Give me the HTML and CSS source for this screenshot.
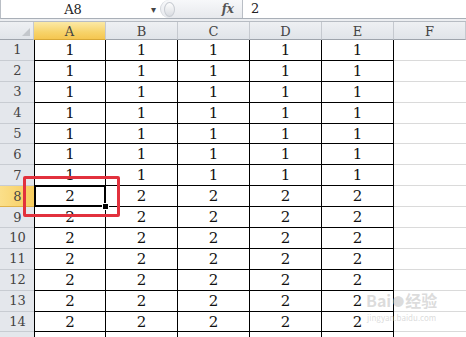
FILE: index.html
```html
<!DOCTYPE html>
<html lang="zh-CN">
<head>
    <meta charset="UTF-8">
    <title>Sheet1</title>
    <link rel="stylesheet" href="styles.css">
</head>
<body>
    <div class="page">
        <div class="formula-bar">
            <div class="name-box">
                <span class="cell-ref">A8</span>
                <span class="drop">&#9662;</span>
            </div>
            <div class="fx-area">
                <span class="knob"></span>
                <span class="fx">fx</span>
            </div>
            <div class="formula">2</div>
        </div>
        <div class="band"></div>

        <div class="sheet">
            <div class="row head">
                <div class="corner"><span class="tri"></span></div>
                <div class="ch active">A</div>
                <div class="ch">B</div>
                <div class="ch">C</div>
                <div class="ch">D</div>
                <div class="ch">E</div>
                <div class="ch">F</div>
            </div>
            <div class="row">
                <div class="rh">1</div>
                <div class="c first">1</div><div class="c">1</div><div class="c">1</div><div class="c">1</div><div class="c">1</div><div class="e"></div>
            </div>
            <div class="row">
                <div class="rh">2</div>
                <div class="c first">1</div><div class="c">1</div><div class="c">1</div><div class="c">1</div><div class="c">1</div><div class="e"></div>
            </div>
            <div class="row">
                <div class="rh">3</div>
                <div class="c first">1</div><div class="c">1</div><div class="c">1</div><div class="c">1</div><div class="c">1</div><div class="e"></div>
            </div>
            <div class="row">
                <div class="rh">4</div>
                <div class="c first">1</div><div class="c">1</div><div class="c">1</div><div class="c">1</div><div class="c">1</div><div class="e"></div>
            </div>
            <div class="row">
                <div class="rh">5</div>
                <div class="c first">1</div><div class="c">1</div><div class="c">1</div><div class="c">1</div><div class="c">1</div><div class="e"></div>
            </div>
            <div class="row">
                <div class="rh">6</div>
                <div class="c first">1</div><div class="c">1</div><div class="c">1</div><div class="c">1</div><div class="c">1</div><div class="e"></div>
            </div>
            <div class="row">
                <div class="rh">7</div>
                <div class="c first">1</div><div class="c">1</div><div class="c">1</div><div class="c">1</div><div class="c">1</div><div class="e"></div>
            </div>
            <div class="row">
                <div class="rh active">8</div>
                <div class="c first selected">2<span class="handle"></span></div><div class="c">2</div><div class="c">2</div><div class="c">2</div><div class="c">2</div><div class="e"></div>
            </div>
            <div class="row">
                <div class="rh">9</div>
                <div class="c first">2</div><div class="c">2</div><div class="c">2</div><div class="c">2</div><div class="c">2</div><div class="e"></div>
            </div>
            <div class="row">
                <div class="rh">10</div>
                <div class="c first">2</div><div class="c">2</div><div class="c">2</div><div class="c">2</div><div class="c">2</div><div class="e"></div>
            </div>
            <div class="row">
                <div class="rh">11</div>
                <div class="c first">2</div><div class="c">2</div><div class="c">2</div><div class="c">2</div><div class="c">2</div><div class="e"></div>
            </div>
            <div class="row">
                <div class="rh">12</div>
                <div class="c first">2</div><div class="c">2</div><div class="c">2</div><div class="c">2</div><div class="c">2</div><div class="e"></div>
            </div>
            <div class="row">
                <div class="rh">13</div>
                <div class="c first">2</div><div class="c">2</div><div class="c">2</div><div class="c">2</div><div class="c">2</div><div class="e"></div>
            </div>
            <div class="row">
                <div class="rh">14</div>
                <div class="c first">2</div><div class="c">2</div><div class="c">2</div><div class="c">2</div><div class="c">2</div><div class="e"></div>
            </div>
            <div class="row">
                <div class="rh"></div>
                <div class="c first"></div><div class="c"></div><div class="c"></div><div class="c"></div><div class="c"></div><div class="e"></div>
            </div>

            <!-- red highlight drawn over the selected cell -->
            <div class="mark"></div>

            <div class="watermark">
                <div class="wm-logo">Bai<span class="paw">&#9679;</span>经验</div>
                <div class="wm-url">jingyan.baidu.com</div>
            </div>
        </div>
    </div>
</body>
</html>
```

FILE: styles.css
```css
* {
    box-sizing: border-box;
}
body {
    margin: 0;
    background: #fff;
    overflow: hidden;
}
.page {
    width: 466px;
    height: 337px;
    overflow: hidden;
    font-family: "DejaVu Serif", serif;
}

/* formula bar */
.formula-bar {
    display: flex;
    height: 19px;
    border-left: 1px solid #b9bec5;
    border-bottom: 1px solid #a9afb7;
}
.name-box {
    width: 159px;
    display: flex;
    align-items: center;
    font-size: 13px;
    color: #222;
}
.cell-ref {
    flex: 1;
    text-align: center;
    padding-right: 6px;
}
.drop {
    font-size: 10px;
    color: #444;
    margin-right: 4px;
    font-family: "DejaVu Sans", sans-serif;
}
.fx-area {
    width: 83px;
    display: flex;
    align-items: center;
    justify-content: space-between;
    background: linear-gradient(#f7f8fa, #e7e9ed);
    border-left: 1px solid #d5d8dd;
    border-right: 1px solid #b9bec5;
    border-radius: 9px 0 0 9px;
    padding: 0 8px 0 3px;
}
.knob {
    width: 11px;
    height: 15px;
    border-radius: 50%;
    background: linear-gradient(#fdfdfd, #d9dce1);
    border: 1px solid #c8ccd2;
}
.fx {
    font-style: italic;
    font-weight: bold;
    font-size: 12px;
    color: #555;
}
.formula {
    flex: 1;
    padding-left: 8px;
    font-size: 13px;
    line-height: 18px;
    color: #222;
}
.band {
    height: 3px;
    background: #eceef1;
    border-bottom: 1px solid #b7bcc3;
}

/* grid */
.sheet {
    position: relative;
}
.row {
    display: grid;
    grid-template-columns: 34px repeat(6, 72px);
    height: 20.9px;
}
.row.head {
    height: 18px;
}
.corner,
.ch,
.rh {
    background: linear-gradient(#eef0f3, #e0e4e9);
    color: #444;
    font-size: 13px;
    display: flex;
    align-items: center;
    justify-content: center;
}
.corner {
    border-right: 1px solid #c5c9cf;
    border-bottom: 1px solid #9ea4ac;
    position: relative;
}
.tri {
    position: absolute;
    right: 3px;
    bottom: 3px;
    width: 0;
    height: 0;
    border-left: 8px solid transparent;
    border-bottom: 8px solid #c3c7cc;
}
.ch {
    border-right: 1px solid #c5c9cf;
    border-bottom: 1px solid #9ea4ac;
    padding-top: 1px;
}
.ch.active {
    background: linear-gradient(#fbe9a6, #f7d36a 60%, #f5c650);
    border-bottom-color: #d8a836;
}
.rh {
    background: #e4e7ec;
    border-bottom: 1px solid #c8ccd2;
    padding-left: 1px;
}
.rh.active {
    background: linear-gradient(90deg, #fbdf8a, #f7cd5e);
    border-bottom-color: #e0b24a;
}
.c {
    border-right: 1px solid #000;
    border-bottom: 1px solid #000;
    display: flex;
    align-items: center;
    justify-content: center;
    font-size: 15px;
    color: #111;
    position: relative;
}
.c.first {
    border-left: 1px solid #000;
}
.e {
    border-bottom: 1px solid #dadada;
}
.selected {
    box-shadow: inset 0 0 0 1px #000;
}
.handle {
    position: absolute;
    right: -4px;
    bottom: -4px;
    width: 7px;
    height: 7px;
    background: #000;
    border: 1px solid #fff;
    z-index: 2;
}

.mark {
    position: absolute;
    left: 23px;
    top: 154px;
    width: 97px;
    height: 41px;
    border: 3px solid #e2313d;
    border-radius: 2px;
    z-index: 3;
}

.watermark {
    position: absolute;
    left: 366px;
    top: 268px;
    color: rgba(190, 190, 190, 0.55);
    font-family: "Noto Sans CJK SC", "DejaVu Sans", sans-serif;
    text-align: center;
    z-index: 4;
}
.wm-logo {
    font-size: 16px;
    font-weight: bold;
    line-height: 20px;
}
.paw {
    font-size: 12px;
    margin: 0 1px;
}
.wm-url {
    font-size: 8px;
    line-height: 12px;
}
```
